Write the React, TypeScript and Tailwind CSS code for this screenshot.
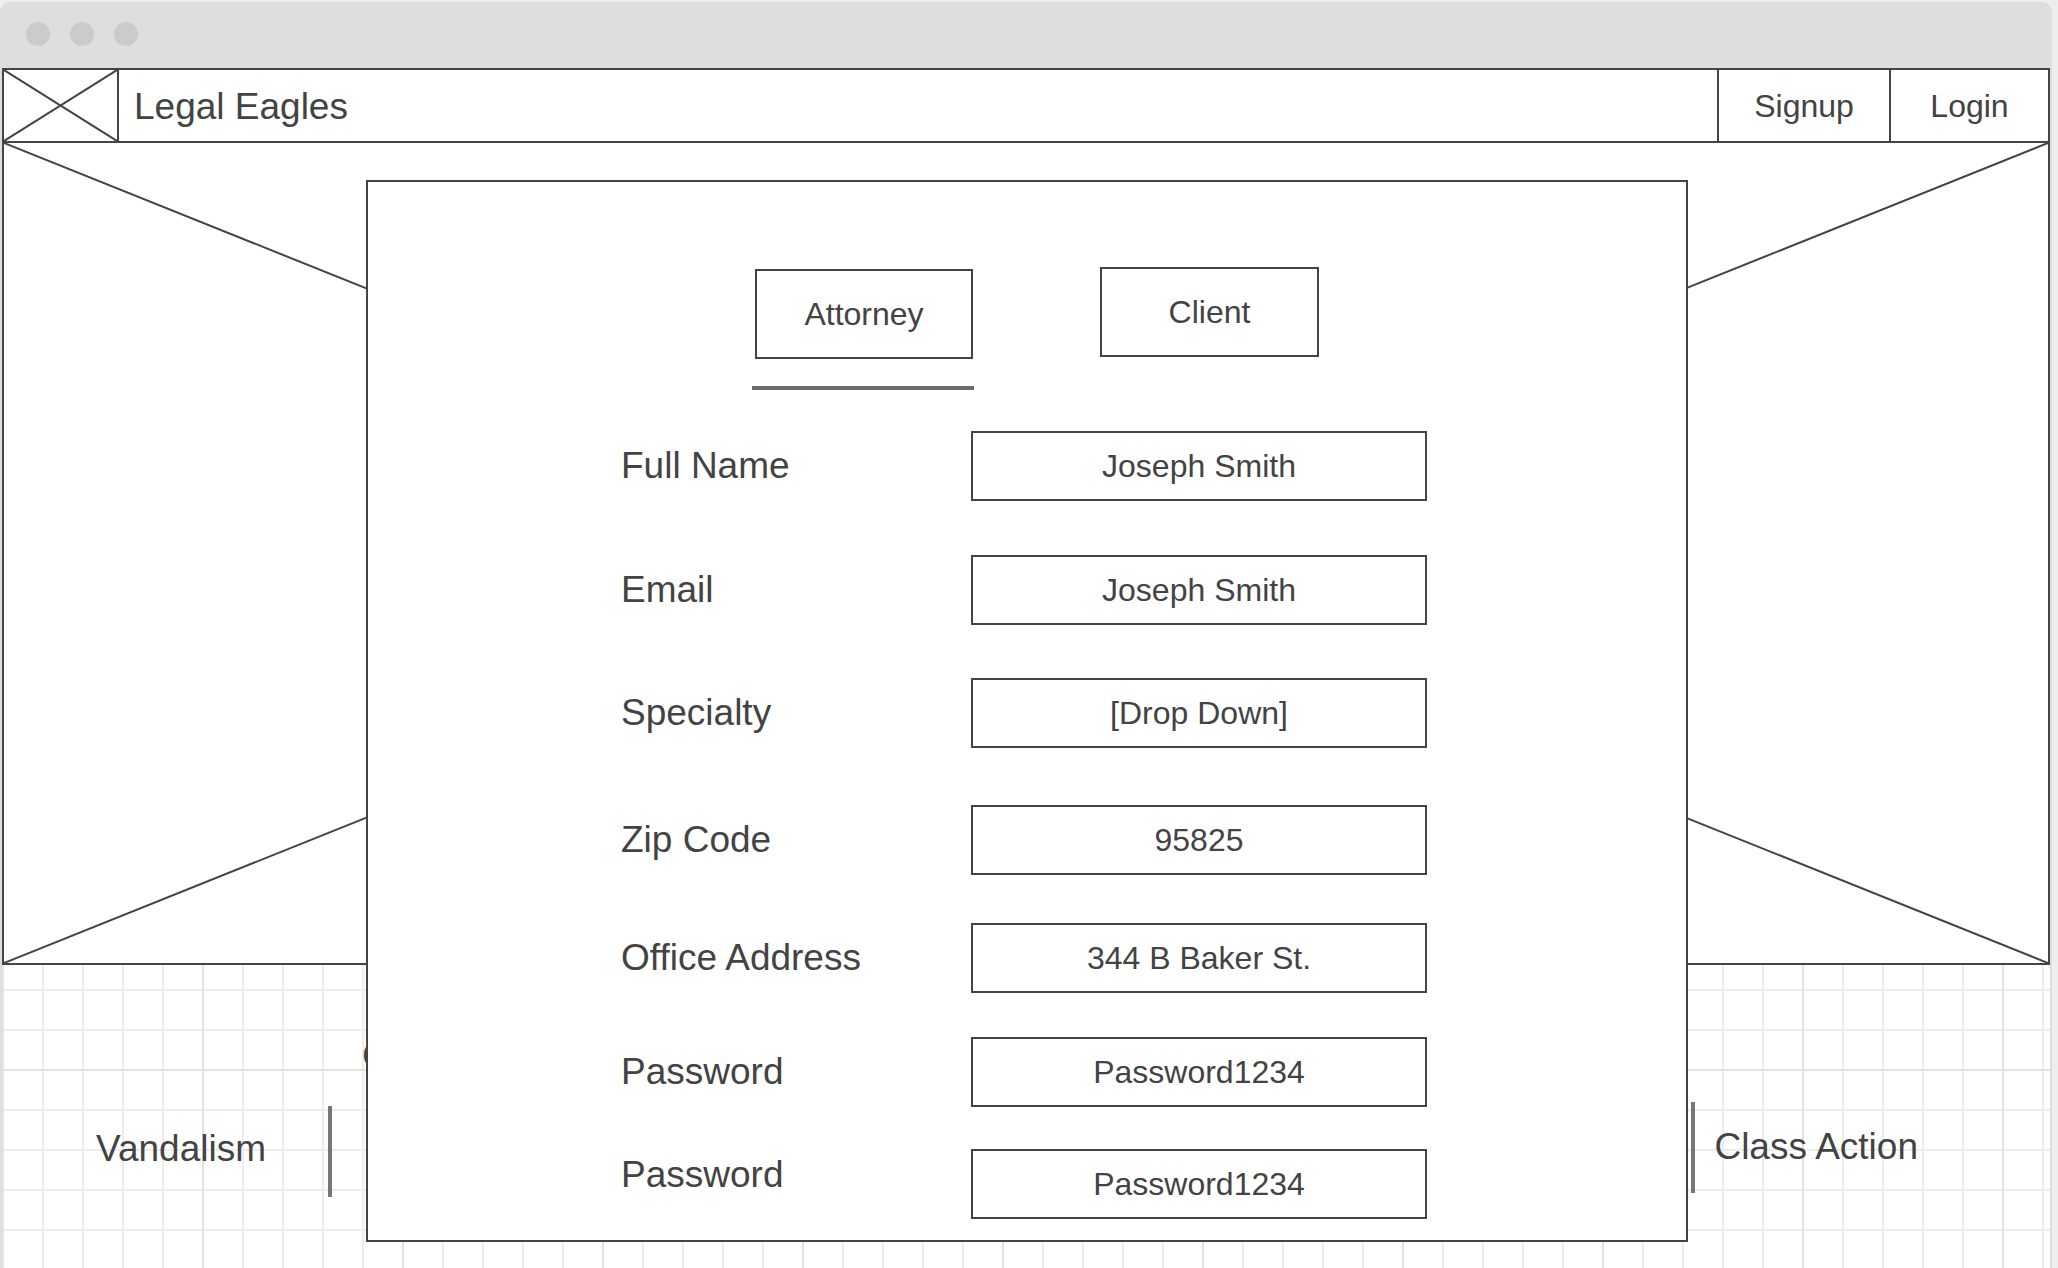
// Legal Eagles — signup modal wireframe
const ink = 'text-[#434343]'

function CrossBox({ className = '' }: { className?: string }) {
  // placeholder "X" used for images in the wireframe
  return (
    <svg
      className={`absolute inset-0 h-full w-full ${className}`}
      viewBox="0 0 100 100"
      preserveAspectRatio="none"
    >
      <line x1="0" y1="0" x2="100" y2="100" stroke="#444" strokeWidth="2" vectorEffect="non-scaling-stroke" />
      <line x1="100" y1="0" x2="0" y2="100" stroke="#444" strokeWidth="2" vectorEffect="non-scaling-stroke" />
    </svg>
  )
}

type Row = { label: string; value: string; gap: string; lift?: boolean }

const rows: Row[] = [
  { label: 'Full Name', value: 'Joseph Smith', gap: 'mt-[41px]' },
  { label: 'Email', value: 'Joseph Smith', gap: 'mt-[54px]' },
  { label: 'Specialty', value: '[Drop Down]', gap: 'mt-[53px]' },
  { label: 'Zip Code', value: '95825', gap: 'mt-[57px]' },
  { label: 'Office Address', value: '344 B Baker St.', gap: 'mt-[48px]' },
  { label: 'Password', value: 'Password1234', gap: 'mt-[44px]' },
  { label: 'Password', value: 'Password1234', gap: 'mt-[42px]', lift: true },
]

function SignupModal() {
  return (
    <div className="absolute left-[364px] top-[112px] z-10 flex h-[1062px] w-[1322px] flex-col border-2 border-[#444] bg-white pt-[85px]">
      {/* role tabs */}
      <div className="flex items-start">
        <div className="ml-[384px] mt-[2px] flex w-[222px] flex-col">
          <div className={`ml-[3px] flex h-[90px] w-[218px] items-center justify-center border-2 border-[#444] text-[32px] ${ink}`}>
            Attorney
          </div>
          <div className="mt-[27px] h-[4px] w-[222px] bg-[#6b6b6b]" />
        </div>
        <div className={`ml-[126px] flex h-[90px] w-[219px] items-center justify-center border-2 border-[#444] text-[32px] ${ink}`}>
          Client
        </div>
      </div>

      {rows.map((r, i) => (
        <div key={i} className={`flex h-[70px] items-center ${r.gap}`}>
          <span className={`ml-[253px] w-[350px] text-[37px] leading-[42px] ${ink} ${r.lift ? 'mb-[18px]' : ''}`}>
            {r.label}
          </span>
          <div className={`flex h-[70px] w-[456px] items-center justify-center border-2 border-[#444] text-[32px] ${ink}`}>
            {r.value}
          </div>
        </div>
      ))}
    </div>
  )
}

export default function App() {
  return (
    <div
      className="h-[1268px] w-[2058px] overflow-hidden bg-[#eeeeee] pt-[2px]"
      style={{ fontFamily: '"Liberation Sans", Arial, sans-serif' }}
    >
      <div className="flex h-[1266px] w-[2052px] flex-col rounded-t-[10px] bg-[#dedede]">
        {/* window chrome */}
        <div className="flex h-[66px] shrink-0 gap-[20px] pl-[26px] pt-[20px]">
          <span className="h-[24px] w-[24px] rounded-full bg-[#cbcbcb]" />
          <span className="h-[24px] w-[24px] rounded-full bg-[#cbcbcb]" />
          <span className="h-[24px] w-[24px] rounded-full bg-[#cbcbcb]" />
        </div>

        <div className="relative mx-[2px] flex flex-1 flex-col bg-white">
          {/* nav */}
          <div className="flex h-[75px] shrink-0 items-stretch border-2 border-[#444]">
            <div className="relative w-[115px] shrink-0 border-r-2 border-[#444]">
              <CrossBox />
            </div>
            <div className={`ml-[15px] flex flex-1 items-center pt-[3px] text-[37px] ${ink}`}>Legal Eagles</div>
            <div className={`flex w-[172px] items-center justify-center border-l-2 border-[#444] text-[32px] ${ink}`}>
              Signup
            </div>
            <div className={`flex w-[159px] items-center justify-center border-l-2 border-[#444] text-[32px] ${ink}`}>
              Login
            </div>
          </div>

          {/* hero image placeholder */}
          <div className="relative h-[822px] shrink-0 border-x-2 border-b-2 border-[#444]">
            <CrossBox />
          </div>

          {/* categories on grid */}
          <div className="flex flex-1 items-start justify-between bg-[linear-gradient(to_right,#e2e2e2_2px,transparent_2px),linear-gradient(to_bottom,#e2e2e2_2px,transparent_2px),linear-gradient(to_right,#ededed_2px,transparent_2px),linear-gradient(to_bottom,#ededed_2px,transparent_2px)] [background-position:0_0,0_104px,0_0,0_24px] [background-size:200px_200px,200px_200px,40px_40px,40px_40px]">
            <div className="flex items-start">
              <span className={`ml-[94px] mt-[163px] text-[37px] leading-[42px] ${ink}`}>Vandalism</span>
              <span className="ml-[62px] mt-[141px] h-[91px] w-[4px] bg-[#777]" />
              <span className={`ml-[30px] mt-[70px] text-[37px] leading-[42px] ${ink}`}>Criminal</span>
            </div>
            <div className="mr-[132px] flex items-start">
              <span className="mt-[137px] h-[91px] w-[4px] bg-[#777]" />
              <span className={`ml-[19px] mt-[161px] text-[37px] leading-[42px] ${ink}`}>Class Action</span>
            </div>
          </div>

          <SignupModal />
        </div>
      </div>
    </div>
  )
}
